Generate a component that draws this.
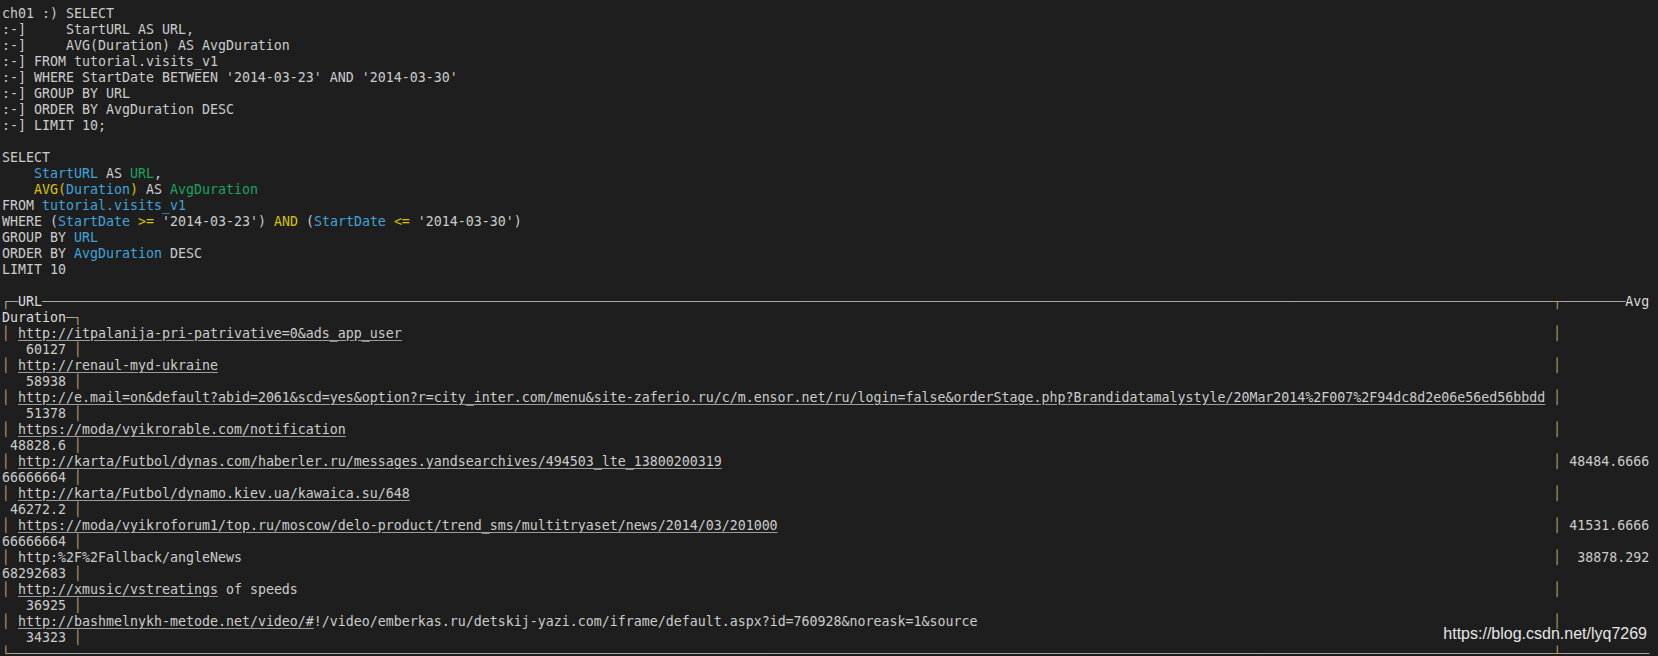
import React from "react";

type Seg = [string, string?];
type Line = Seg[];

const CY = "text-[#3ea4d9]";
const GR = "text-[#1ca35e]";
const YE = "text-[#d6c400]";
const PI = "text-[#bb9c6c]";
const BO = "text-[#a9a9a9]";
const HD = "text-[#dcdcdc]";
const UL = "underline decoration-[#9c9c9c] underline-offset-[2px]";

const W = 191;

type Row = { u: [string, boolean][]; v: string };

const rows: Row[] = [
  { u: [["http://itpalanija-pri-patrivative=0&ads_app_user", true]], v: "60127" },
  { u: [["http://renaul-myd-ukraine", true]], v: "58938" },
  {
    u: [
      [
        "http://e.mail=on&default?abid=2061&scd=yes&option?r=city_inter.com/menu&site-zaferio.ru/c/m.ensor.net/ru/login=false&orderStage.php?Brandidatamalystyle/20Mar2014%2F007%2F94dc8d2e06e56ed56bbdd",
        true,
      ],
    ],
    v: "51378",
  },
  { u: [["https://moda/vyikrorable.com/notification", true]], v: "48828.6" },
  {
    u: [["http://karta/Futbol/dynas.com/haberler.ru/messages.yandsearchives/494503_lte_13800200319", true]],
    v: "48484.666666666664",
  },
  { u: [["http://karta/Futbol/dynamo.kiev.ua/kawaica.su/648", true]], v: "46272.2" },
  {
    u: [["https://moda/vyikroforum1/top.ru/moscow/delo-product/trend_sms/multitryaset/news/2014/03/201000", true]],
    v: "41531.666666666664",
  },
  { u: [["http:%2F%2Fallback/angleNews", false]], v: "38878.29268292683" },
  {
    u: [
      ["http://xmusic/vstreatings", true],
      [" of speeds", false],
    ],
    v: "36925",
  },
  {
    u: [
      ["http://bashmelnykh-metode.net/video/#", true],
      ["!/video/emberkas.ru/detskij-yazi.com/iframe/default.aspx?id=760928&noreask=1&source", false],
    ],
    v: "34323",
  },
];

const lines: Line[] = [
  [["ch01 :) SELECT"]],
  [[":-]     StartURL AS URL,"]],
  [[":-]     AVG(Duration) AS AvgDuration"]],
  [[":-] FROM tutorial.visits_v1"]],
  [[":-] WHERE StartDate BETWEEN '2014-03-23' AND '2014-03-30'"]],
  [[":-] GROUP BY URL"]],
  [[":-] ORDER BY AvgDuration DESC"]],
  [[":-] LIMIT 10;"]],
  [[""]],
  [["SELECT"]],
  [["    "], ["StartURL", CY], [" AS "], ["URL", GR], [","]],
  [["    "], ["AVG(", YE], ["Duration", CY], [")", YE], [" AS "], ["AvgDuration", GR]],
  [["FROM "], ["tutorial.visits_v1", CY]],
  [
    ["WHERE ("],
    ["StartDate", CY],
    [" "],
    [">=", YE],
    [" '2014-03-23') "],
    ["AND", YE],
    [" ("],
    ["StartDate", CY],
    [" "],
    ["<=", YE],
    [" '2014-03-30')"],
  ],
  [["GROUP BY "], ["URL", CY]],
  [["ORDER BY "], ["AvgDuration", CY], [" DESC"]],
  [["LIMIT 10"]],
  [[""]],
  [
    ["┌─", BO],
    ["URL", HD],
    ["─".repeat(189), BO],
    ["┬", PI],
    ["─".repeat(8), BO],
    ["Avg", HD],
  ],
  [
    ["Duration", HD],
    ["─", BO],
    ["┐", PI],
  ],
];

rows.forEach((r) => {
  const len = r.u.reduce((a, s) => a + s[0].length, 0);
  const val = r.v.padStart(18, " ");
  const first: Line = [["│", PI], [" "]];
  r.u.forEach(([t, u]) => first.push([t, u ? UL : undefined]));
  first.push([" ".repeat(Math.max(0, W - len)) + " "]);
  first.push(["│", PI]);
  first.push([" " + val.slice(0, 10)]);
  lines.push(first);
  lines.push([[val.slice(10) + " "], ["│", PI]]);
});

lines.push([
  ["└", PI],
  ["─".repeat(193), BO],
  ["┴", PI],
  ["─".repeat(11), BO],
]);

export default function App() {
  return (
    <div className="relative w-[1658px] h-[656px] overflow-hidden bg-[#1e1e1e]">
      <div className="pt-[6px] pl-[2px] font-['DejaVu_Sans_Mono','Liberation_Mono',monospace] text-[13.29px] leading-[16px] text-[#cccccc]">
        {lines.map((line, i) => (
          <div key={i} className="h-[16px] whitespace-pre">
            {line.map(([t, c], j) => (
              <span key={j} className={c}>
                {t}
              </span>
            ))}
          </div>
        ))}
      </div>
      <div className="absolute right-[11px] top-[624px] font-['Liberation_Sans',Arial,sans-serif] text-[16px] leading-[20px] text-[#e6e6e6]">
        https://blog.csdn.net/lyq7269
      </div>
    </div>
  );
}
